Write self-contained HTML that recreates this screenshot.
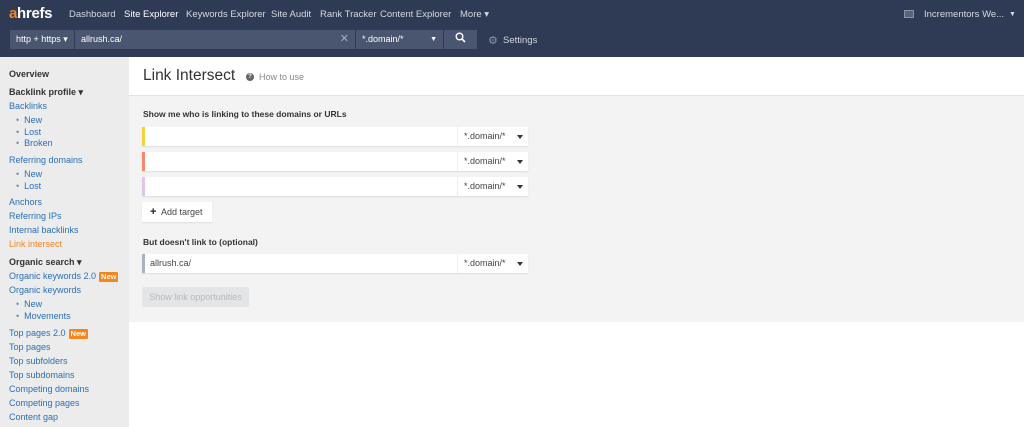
<!DOCTYPE html>
<html><head><meta charset="utf-8"><style>
*{margin:0;padding:0;box-sizing:border-box}
body{width:1024px;height:427px;overflow:hidden;font-family:"Liberation Sans",Arial,sans-serif;font-size:9px;background:#fff;position:relative}
.hd{position:absolute;left:0;top:0;width:1024px;height:57px;background:#2f3b54}
.hd .a{position:absolute;top:9px;color:#d4d8e0;font-size:9.5px}
.logo{position:absolute;left:9px;top:5px;font-size:15px;font-weight:bold;color:#fff;letter-spacing:-.3px}
.logo b{color:#f7851f}
.inp{position:absolute;top:30px;height:19px;background:#4a5670;color:#fff;font-size:9px;line-height:19px}
.sb{position:absolute;left:0;top:57px;width:129px;height:370px;background:#ececec}
.sb div{position:absolute;left:9px;font-size:9px;color:#2a6fb7;white-space:nowrap}
.sb .h{color:#333;font-weight:bold}
.sb .s{left:16px}
.sb .s i{font-style:normal;color:#7a8fa8;margin-right:5px}
.new{background:#f7851f;color:#fff;font-size:7.5px;font-weight:bold;padding:0 2px;margin-left:3px;border-radius:1px;line-height:10px;display:inline-block}
.top{position:absolute;left:129px;top:57px;width:895px;height:39px;background:#fff;border-bottom:1px solid #e3e3e3}
.main{position:absolute;left:129px;top:96px;width:895px;height:226px;background:#f3f3f3}
.lbl{position:absolute;left:14px;font-weight:bold;color:#333;font-size:8.5px}
.row{position:absolute;left:13px;width:386px;height:19px;background:#fff;box-shadow:0 1px 1px #ddd;font-size:9px;color:#444;line-height:19px}
.row .bar{position:absolute;left:0;top:0;width:3px;height:19px}
.row .dd{position:absolute;right:0;top:0;width:71px;height:19px;border-left:1px solid #eee;padding-left:6px}
.row .dd:after{content:"";position:absolute;right:5px;top:8px;border:3px solid transparent;border-top:4px solid #333}
</style></head><body>
<div class="hd">
<div class="logo"><b>a</b>hrefs</div>
<span class="a" style="left:69px">Dashboard</span>
<span class="a" style="left:124px;color:#fff">Site Explorer</span>
<span class="a" style="left:186px">Keywords Explorer</span>
<span class="a" style="left:271px">Site Audit</span>
<span class="a" style="left:320px">Rank Tracker</span>
<span class="a" style="left:380px">Content Explorer</span>
<span class="a" style="left:460px">More ▾</span>
<span style="position:absolute;left:904px;top:10px;width:10px;height:8px;border:1px solid #8a93a6;background:#5a6479"></span>
<span class="a" style="left:924px">Incrementors We...</span>
<span class="a" style="left:1009px;font-size:7px;top:11px">▼</span>
<div class="inp" style="left:10px;width:64px;padding-left:6px">http + https ▾</div>
<div class="inp" style="left:75px;width:280px;padding-left:6px">allrush.ca/<span style="position:absolute;right:6px;color:#aab;font-size:11px">✕</span></div>
<div class="inp" style="left:356px;width:87px;padding-left:6px">*.domain/*<span style="position:absolute;right:6px;font-size:7px">▼</span></div>
<div class="inp" style="left:444px;width:33px;text-align:center"><svg width="11" height="11" viewBox="0 0 11 11" style="vertical-align:-1px"><circle cx="4.5" cy="4.5" r="3.3" fill="none" stroke="#fff" stroke-width="1.4"/><path d="M7 7L10 10" stroke="#fff" stroke-width="1.6"/></svg></div>
<span class="a" style="left:488px;top:34px;color:#8c95a8;font-size:11px">⚙</span>
<span class="a" style="left:503px;top:35px">Settings</span>
</div>
<div class="sb">
<div class="h" style="top:12px">Overview</div>
<div class="h" style="top:30px">Backlink profile ▾</div>
<div style="top:44px">Backlinks</div>
<div class="s" style="top:58px"><i>•</i>New</div>
<div class="s" style="top:70px"><i>•</i>Lost</div>
<div class="s" style="top:81px"><i>•</i>Broken</div>
<div style="top:98px">Referring domains</div>
<div class="s" style="top:112px"><i>•</i>New</div>
<div class="s" style="top:124px"><i>•</i>Lost</div>
<div style="top:140px">Anchors</div>
<div style="top:154px">Referring IPs</div>
<div style="top:168px">Internal backlinks</div>
<div style="top:182px;color:#f7851f">Link intersect</div>
<div class="h" style="top:200px">Organic search ▾</div>
<div style="top:214px">Organic keywords 2.0<span class="new">New</span></div>
<div style="top:228px">Organic keywords</div>
<div class="s" style="top:242px"><i>•</i>New</div>
<div class="s" style="top:254px"><i>•</i>Movements</div>
<div style="top:271px">Top pages 2.0<span class="new">New</span></div>
<div style="top:285px">Top pages</div>
<div style="top:299px">Top subfolders</div>
<div style="top:313px">Top subdomains</div>
<div style="top:327px">Competing domains</div>
<div style="top:341px">Competing pages</div>
<div style="top:355px">Content gap</div>
</div>
<div class="top">
<span style="position:absolute;left:14px;top:10px;font-size:15.5px;color:#333">Link Intersect</span>
<span style="position:absolute;left:117px;top:16px;width:8px;height:8px;border-radius:50%;background:#666;color:#fff;font-size:6px;text-align:center;line-height:8px;font-weight:bold">?</span>
<span style="position:absolute;left:130px;top:15px;color:#888;font-size:9px">How to use</span>
</div>
<div class="main">
<div class="lbl" style="top:13px">Show me who is linking to these domains or URLs</div>
<div class="row" style="top:31px"><span class="bar" style="background:#f6d23a"></span><span class="dd">*.domain/*</span></div>
<div class="row" style="top:56px"><span class="bar" style="background:#f48a6b"></span><span class="dd">*.domain/*</span></div>
<div class="row" style="top:81px"><span class="bar" style="background:#e3c5ec"></span><span class="dd">*.domain/*</span></div>
<div style="position:absolute;left:13px;top:106px;width:70px;height:20px;background:#fff;box-shadow:0 1px 1px #ddd;color:#444;line-height:20px;padding-left:8px"><b style="font-size:11px;color:#222">+</b>&nbsp; Add target</div>
<div class="lbl" style="top:141px">But doesn't link to (optional)</div>
<div class="row" style="top:158px;padding-left:8px"><span class="bar" style="background:#a8b3bd"></span>allrush.ca/<span class="dd">*.domain/*</span></div>
<div style="position:absolute;left:13px;top:191px;width:107px;height:20px;background:#e4e5e6;border-radius:2px;color:#b8b8b8;line-height:20px;text-align:center">Show link opportunities</div>
</div>
</body></html>
